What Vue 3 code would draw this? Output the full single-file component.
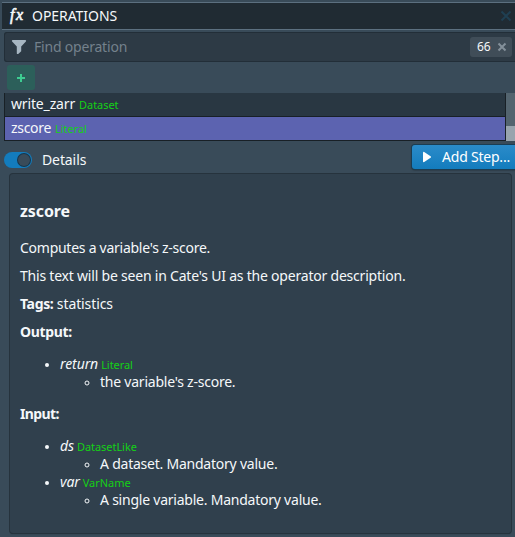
<script setup>
import { ref } from 'vue'

const operations = [
  { name: 'write_zarr', type: 'Dataset' },
  { name: 'zscore', type: 'Literal' },
]
const selected = ref('zscore')
const details = ref(true)
const outputs = [{ name: 'return', type: 'Literal', text: "the variable's z-score." }]
const inputs = [
  { name: 'ds', type: 'DatasetLike', text: 'A dataset. Mandatory value.' },
  { name: 'var', type: 'VarName', text: 'A single variable. Mandatory value.' },
]
</script>

<template>
  <main class="panel">
    <header class="title-bar">
      <span class="fx">fx</span>
      <span class="title">OPERATIONS</span>
      <svg class="close" width="12" height="12" viewBox="0 0 12 12"><path d="M1.5 1.5l9 9M10.5 1.5l-9 9" /></svg>
    </header>

    <div class="search">
      <svg class="filter" width="16" height="16" viewBox="0 0 16 16"><path d="M1.500 1h13q1.200.6.4 1.600L10.200 7.500v4.700L7.200 15q-1.200.4-1.400-.5V7.500L1.100 2.600Q.3 1.600 1.500 1z" /></svg>
      <span class="placeholder">Find operation</span>
      <span class="tag">66
        <svg width="10" height="10" viewBox="0 0 10 10"><path d="M1.500 1.500l7 7M8.500 1.500l-7 7" /></svg>
      </span>
    </div>

    <button class="add"><svg width="8" height="8" viewBox="0 0 8 8"><path d="M4 0v8M0 4h8" /></svg></button>

    <div class="list">
      <div class="rows">
        <div
          v-for="op in operations"
          :key="op.name"
          class="row"
          :class="{ selected: op.name === selected }"
          @click="selected = op.name"
        >
          <span class="op-name">{{ op.name }}</span><span class="type">{{ op.type }}</span>
        </div>
      </div>
      <div class="track"><div class="thumb"></div></div>
    </div>

    <div class="actions">
      <span class="switch" :class="{ on: details }" @click="details = !details"><i></i></span>
      <span class="label">Details</span>
      <button class="step">
        <svg width="10" height="12" viewBox="0 0 10 12"><path d="M1 1.800Q1 .5 2.200 1L8.600 5.200Q9.500 6 8.600 6.800L2.200 11Q1 11.500 1 10.200z" /></svg>
        <span>Add Step...</span>
      </button>
    </div>

    <section class="card">
      <h4>zscore</h4>
      <p class="computes">Computes a variable's z-score.</p>
      <p>This text will be seen in Cate's UI as the operator description.</p>
      <p><b>Tags:</b> <span class="stat">statistics</span></p>
      <p><b>Output:</b></p>
      <ul>
        <li v-for="o in outputs" :key="o.name">
          <div class="line"><em>{{ o.name }}</em><span class="type">{{ o.type }}</span></div>
          <ul><li>{{ o.text }}</li></ul>
        </li>
      </ul>
      <p><b class="narrow">Input:</b></p>
      <ul>
        <li v-for="o in inputs" :key="o.name">
          <div class="line"><em>{{ o.name }}</em><span class="type">{{ o.type }}</span></div>
          <ul><li>{{ o.text }}</li></ul>
        </li>
      </ul>
    </section>
  </main>
</template>

<style>
body { margin: 0; background: #394b59; overflow: hidden; }
</style>

<style scoped>
* { box-sizing: border-box; }
.panel {
  width: 515px;
  height: 537px;
  overflow: hidden;
  padding-top: 2px;
  background: #394b59;
  color: #f5f8fa;
  font: 14px/18px "Noto Sans", "Open Sans", sans-serif;
  letter-spacing: -0.21px;
}
.title-bar {
  display: flex;
  align-items: center;
  height: 28px;
  margin-left: 2px;
  padding: 0 3px 0 7px;
  background: #202b33;
  border-top: 1px solid #5c7080;
  border-bottom: 1px solid #5c7080;
}
.fx { width: 23px; padding: 0 0 2px 1px; font: italic 16px/18px "Liberation Serif", serif; letter-spacing: 1.5px; -webkit-text-stroke: 0.6px #f5f8fa; }
.title { letter-spacing: -0.05px; }
.close { margin-left: auto; fill: none; stroke: #1f3f52; stroke-width: 2; }
.search {
  display: flex;
  align-items: center;
  height: 30px;
  margin: 2px -4px 0 4px;
  padding: 0 7px;
  border-radius: 3px;
  background: #2d3a45;
  box-shadow: inset 0 0 0 1px #222e38;
}
.filter { fill: #a7b6c2; }
.placeholder { margin-left: 7px; color: #74818c; letter-spacing: -0.2px; }
.tag {
  display: flex;
  align-items: center;
  justify-content: space-between;
  width: 42px;
  height: 20px;
  margin-left: auto;
  padding: 0 5px 0 7px;
  border-radius: 3px;
  background: #404d58;
  font-size: 12px;
}
.tag svg { fill: none; stroke: #84909a; stroke-width: 2; }
button { border: 0; font: inherit; letter-spacing: inherit; color: #fff; }
.add {
  display: flex;
  align-items: center;
  justify-content: center;
  width: 28px;
  height: 25px;
  margin: 3px 0 0 7px;
  padding: 0;
  border-radius: 3px;
  background: #2c5f5a;
}
.add svg { stroke: #3dcc91; stroke-width: 2; }
.list { display: flex; height: 48px; margin: 3px 0 0 4px; }
.rows { width: 502px; border-left: 1px solid #182026; border-right: 1px solid #182026; }
.row {
  display: flex;
  align-items: baseline;
  height: 24px;
  padding: 2px 6px;
  border-bottom: 1px solid #182026;
  background: #293742;
}
.row.selected { background: #5c63b0; }
.op-name { letter-spacing: -0.15px; }
.selected .op-name { letter-spacing: -0.3px; }
.type { margin-left: 4px; color: #15d016; font-size: 11px; letter-spacing: -0.05px; }
.track { flex: 1; background: #53646f; padding-top: 33px; }
.thumb { height: 15px; background: #98a4ae; }
.actions { display: flex; height: 33px; padding: 4px 0 0 4px; }
.switch { width: 28px; height: 16px; margin-top: 7px; padding: 2px; border-radius: 8px; background: #5c7080; }
.switch.on { background: #137cbd; }
.switch i { display: block; width: 12px; height: 12px; border-radius: 50%; background: #394b59; box-shadow: 0 0 0 1px #17354a; }
.switch.on i { margin-left: 12px; }
.label { margin: 6px 0 0 10px; letter-spacing: -0.1px; }
.step {
  display: flex;
  align-items: center;
  width: 111px;
  height: 24px;
  margin: 0 -8px 0 auto;
  padding: 0 0 0 10px;
  border-radius: 3px;
  background: linear-gradient(#2b8bc9, #137cbd);
  box-shadow: 0 0 0 1px #1b3d53, 0 1px 2px #182026;
  white-space: nowrap;
}
.step svg { fill: #fff; }
.step span { margin-left: 10px; }
.card {
  height: 359px;
  margin: 0 4px 0 10px;
  padding: 28px 10px 0;
  border-radius: 3px;
  background: #30404d;
  box-shadow: 0 0 0 1px #26333d, 0 1px 1px #1d2931;
}
h4 { margin: 0 0 19px; font-size: 16px; line-height: 18px; letter-spacing: -0.1px; }
p { margin: 0 0 10px; }
.computes { letter-spacing: -0.26px; }
b { letter-spacing: -0.35px; }
b.narrow { letter-spacing: -0.6px; }
.stat { letter-spacing: -0.1px; }
ul { margin: 0; padding-left: 40px; }
.card > ul { margin: 14px 0; }
li { line-height: 18px; }
ul ul { list-style: circle; }
.line { display: flex; align-items: baseline; height: 18px; }
.line em { letter-spacing: -0.1px; }
.line .type { margin-left: 3px; }
.card > ul ul li { letter-spacing: -0.23px; }
li::marker { font-size: 11px; }
</style>
